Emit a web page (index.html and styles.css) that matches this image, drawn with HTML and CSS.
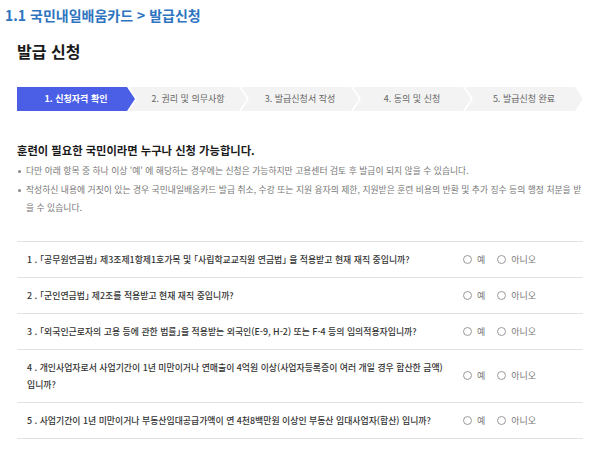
FILE: index.html
```html
<!DOCTYPE html>
<html lang="ko">
<head>
<meta charset="utf-8">
<link rel="stylesheet" href="styles.css">
</head>
<body>
<div class="crumb">1.1 국민내일배움카드 &gt; 발급신청</div>
<div class="page">
  <h1 class="title">발급 신청</h1>
  <div class="steps">
    <div class="step first active">1. 신청자격 확인</div>
    <div class="step">2. 권리 및 의무사항</div>
    <div class="step">3. 발급신청서 작성</div>
    <div class="step">4. 동의 및 신청</div>
    <div class="step">5. 발급신청 완료</div>
  </div>
  <h2 class="lead">훈련이 필요한 국민이라면 누구나 신청 가능합니다.</h2>
  <ul class="notes">
    <li>다만 아래 항목 중 하나 이상 '예' 에 해당하는 경우에는 신청은 가능하지만 고용센터 검토 후 발급이 되지 않을 수 있습니다.</li>
    <li>작성하신 내용에 거짓이 있는 경우 국민내일배움카드 발급 취소, 수강 또는 지원 융자의 제한, 지원받은 훈련 비용의 반환 및 추가 징수 등의 행정 처분을 받을 수 있습니다.</li>
  </ul>
  <div class="qlist">
    <div class="q">
      <div class="qtext">1 . 「공무원연금법」 제3조제1항제1호가목 및 「사립학교교직원 연금법」 을 적용받고 현재 재직 중입니까?</div>
      <div class="opts"><span class="radio"></span><span class="lbl">예</span><span class="radio"></span><span class="lbl">아니오</span></div>
    </div>
    <div class="q">
      <div class="qtext">2 . 「군인연금법」 제2조를 적용받고 현재 재직 중입니까?</div>
      <div class="opts"><span class="radio"></span><span class="lbl">예</span><span class="radio"></span><span class="lbl">아니오</span></div>
    </div>
    <div class="q">
      <div class="qtext">3 . 「외국인근로자의 고용 등에 관한 법률」을 적용받는 외국인(E-9, H-2) 또는 F-4 등의 임의적용자입니까?</div>
      <div class="opts"><span class="radio"></span><span class="lbl">예</span><span class="radio"></span><span class="lbl">아니오</span></div>
    </div>
    <div class="q">
      <div class="qtext">4 . 개인사업자로서 사업기간이 1년 미만이거나 연매출이 4억원 이상(사업자등록증이 여러 개일 경우 합산한 금액) 입니까?</div>
      <div class="opts"><span class="radio"></span><span class="lbl">예</span><span class="radio"></span><span class="lbl">아니오</span></div>
    </div>
    <div class="q">
      <div class="qtext">5 . 사업기간이 1년 미만이거나 부동산임대공급가액이 연 4천8백만원 이상인 부동산 임대사업자(합산) 입니까?</div>
      <div class="opts"><span class="radio"></span><span class="lbl">예</span><span class="radio"></span><span class="lbl">아니오</span></div>
    </div>
  </div>
</div>
</body>
</html>
```
FILE: styles.css
```css
* { box-sizing: border-box; }
body {
  margin: 0;
  background: #fff;
  font-family: "Noto Sans CJK KR", "Noto Sans", sans-serif;
  color: #222;
}
.crumb {
  padding: 6px 0 0 5px;
  font-size: 14px;
  font-weight: 700;
  color: #2f74c0;
  line-height: 18px;
}
.page {
  padding: 0 17px;
}
.title {
  margin: 15px 0 0;
  font-size: 16px;
  font-weight: 700;
  line-height: 24px;
  color: #1a1a1a;
}
.steps {
  display: flex;
  margin-top: 24px;
  height: 24px;
}
.step {
  width: 118px;
  flex: none;
  height: 24px;
  line-height: 24px;
  text-align: center;
  font-size: 9px;
  color: #666;
  background: #f3f3f3;
  margin-left: -6px;
  clip-path: polygon(0 0, calc(100% - 8px) 0, 100% 50%, calc(100% - 8px) 100%, 0 100%, 8px 50%);
}
.step.first {
  margin-left: 0;
  clip-path: polygon(0 0, calc(100% - 8px) 0, 100% 50%, calc(100% - 8px) 100%, 0 100%);
}
.step.active {
  background: #4a5ee6;
  color: #fff;
  font-weight: 700;
}
.lead {
  margin: 30px 0 0;
  font-size: 11.3px;
  font-weight: 700;
  line-height: 18px;
  color: #1a1a1a;
}
.notes {
  list-style: none;
  margin: 3px 0 0;
  padding: 0;
  font-size: 8.8px;
  color: #777;
  line-height: 18.5px;
}
.notes li {
  position: relative;
  padding-left: 9px;
}
.notes li::before {
  content: "";
  position: absolute;
  left: 1px;
  top: 8px;
  width: 3px;
  height: 3px;
  border-radius: 50%;
  background: #888;
}
.qlist {
  margin-top: 23px;
  border-top: 1px solid #e2e2e2;
}
.q {
  display: flex;
  align-items: center;
  border-bottom: 1px solid #e2e2e2;
  padding: 9px 0 9px 10px;
  min-height: 36px;
}
.qtext {
  width: 436px;
  flex: none;
  padding-right: 10px;
  font-size: 8.9px;
  font-weight: 500;
  color: #333;
  line-height: 17px;
  word-break: keep-all;
  font-feature-settings: "halt";
}
.opts {
  display: flex;
  align-items: center;
  font-size: 9px;
  color: #777;
}
.radio {
  width: 9px;
  height: 9px;
  border: 1px solid #9a9a9a;
  border-radius: 50%;
  margin-right: 5px;
}
.lbl {
  margin-right: 12px;
}
```
